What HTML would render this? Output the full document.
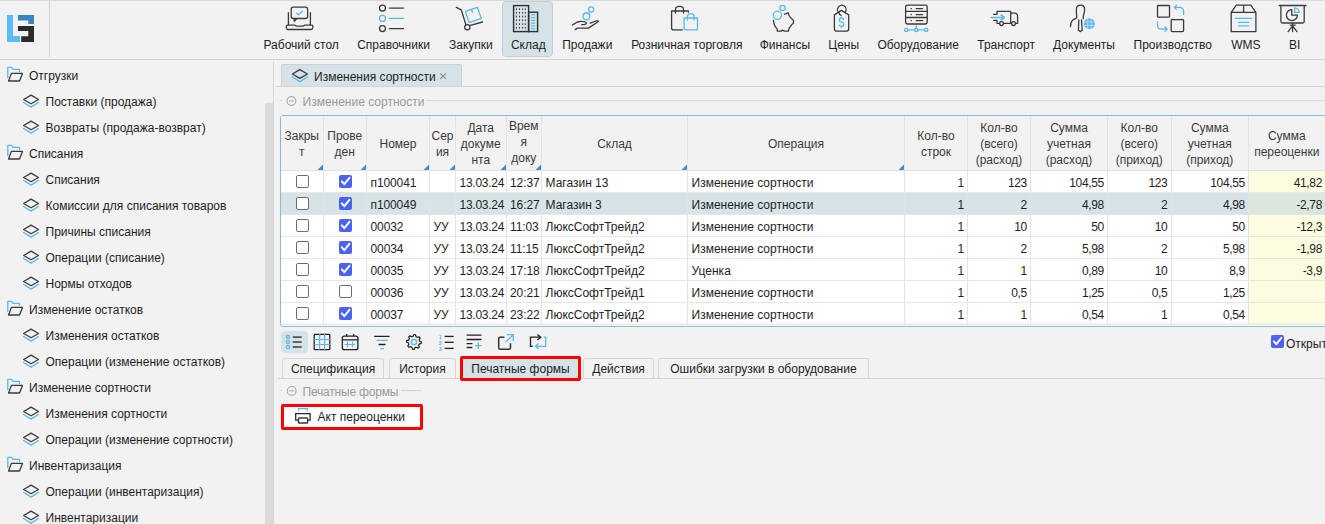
<!DOCTYPE html>
<html><head><meta charset="utf-8"><style>
html,body{margin:0;padding:0}
body{width:1325px;height:524px;background:#f2f2f2;position:relative;overflow:hidden;font-family:"Liberation Sans",sans-serif;font-size:12px;color:#1e1e1e}
.ab{position:absolute;white-space:nowrap}
.nl{position:absolute;top:38px;width:140px;text-align:center;font-size:12px;line-height:14px;color:#1e1e1e}
.si{position:absolute;font-size:12px;line-height:14px;color:#1e1e1e}
.th{position:absolute;text-align:center;color:#3a3a3a;font-size:12px;line-height:16px}
.td{position:absolute;font-size:12px;line-height:14px;white-space:nowrap;color:#1e1e1e}
.r{text-align:right}
</style></head><body>

<div class="ab" style="left:0;top:0;width:1325px;height:1px;background:#d9d9d9"></div>
<div class="ab" style="left:0;top:59px;width:1325px;height:1px;background:#d2d2d2"></div>
<div class="ab" style="left:49px;top:1px;width:1px;height:56px;background:#d2d2d2"></div>
<div class="ab" style="left:502px;top:1px;width:49px;height:54px;background:#d5e3e8;border:1px solid #c9cfd1;border-radius:4px"></div>
<div class="nl" style="left:231.2px">Рабочий стол</div>
<div class="nl" style="left:323.5px">Справочники</div>
<div class="nl" style="left:400.9px">Закупки</div>
<div class="nl" style="left:458.3px">Склад</div>
<div class="nl" style="left:517.3px">Продажи</div>
<div class="nl" style="left:616.8px">Розничная торговля</div>
<div class="nl" style="left:714.9px">Финансы</div>
<div class="nl" style="left:773.7px">Цены</div>
<div class="nl" style="left:848.2px">Оборудование</div>
<div class="nl" style="left:936.1px">Транспорт</div>
<div class="nl" style="left:1014.0px">Документы</div>
<div class="nl" style="left:1102.7px">Производство</div>
<div class="nl" style="left:1175.8px">WMS</div>
<div class="nl" style="left:1224.6px">BI</div>
<svg class="ab" style="left:0;top:0" width="1325" height="60" viewBox="0 0 1325 60"><rect x="7" y="15" width="6" height="27" fill="#5bbdf5"/><rect x="7" y="36" width="13" height="6" fill="#5bbdf5"/><path d="M18 15H34V24H28.3V20.5H18Z" fill="#3886c0"/><path d="M18 26H34V42H21.2V36.3H28.3V31H18Z" fill="#2b2b2b"/><path d="M293.2 18.5H305.6Q307.6 18.5 307.6 16.5V9.2Q307.6 7.2 305.6 7.2H293.2Q291.2 7.2 291.2 9.2V16.5Q291.2 18.5 293.2 18.5M294 18.6L294.3 21.3L296.8 18.6" fill="none" stroke="#3a3a3a" stroke-width="1.3" stroke-linecap="round" stroke-linejoin="round"/><path d="M296.7 13.3L298.5 14.8L302.5 11.2" fill="none" stroke="#5bb8ec" stroke-width="1.3" stroke-linecap="round" stroke-linejoin="round"/><path d="M288.4 12.7V25.2M310.4 12.7V25.2M287.5 25.2H295L296.5 26.2H303L304.5 25.2H312Q312.8 25.2 312.8 26.2V27.8Q312.8 29.5 311 29.5H288Q286.3 29.5 286.3 27.8V26.2Q286.3 25.2 287.5 25.2" fill="none" stroke="#3a3a3a" stroke-width="1.3" stroke-linecap="round" stroke-linejoin="round"/><circle cx="382.5" cy="8.1" r="3" fill="none" stroke="#3a3a3a" stroke-width="1.3" stroke-linecap="round" stroke-linejoin="round"/><path d="M389.3 8.1H403.6" fill="none" stroke="#3a3a3a" stroke-width="1.3" stroke-linecap="round" stroke-linejoin="round"/><circle cx="382.5" cy="18.4" r="3" fill="none" stroke="#5bb8ec" stroke-width="1.3" stroke-linecap="round" stroke-linejoin="round"/><path d="M389.3 18.4H403.6" fill="none" stroke="#5bb8ec" stroke-width="1.3" stroke-linecap="round" stroke-linejoin="round"/><circle cx="382.5" cy="28.6" r="3" fill="none" stroke="#3a3a3a" stroke-width="1.3" stroke-linecap="round" stroke-linejoin="round"/><path d="M389.3 28.6H403.6" fill="none" stroke="#3a3a3a" stroke-width="1.3" stroke-linecap="round" stroke-linejoin="round"/><path d="M456.3 7.3L461.2 9.8L466 25M470.3 25.3L482.5 22" fill="none" stroke="#3a3a3a" stroke-width="1.3" stroke-linecap="round" stroke-linejoin="round"/><circle cx="467.3" cy="27.2" r="2.6" fill="none" stroke="#3a3a3a" stroke-width="1.3" stroke-linecap="round" stroke-linejoin="round"/><path d="M465.4 11.3L477.3 7.3L481.3 18.3L469.1 22.6Z M471.4 9.3L472.3 12.3" fill="none" stroke="#5bb8ec" stroke-width="1.3" stroke-linecap="round" stroke-linejoin="round"/><rect x="513.6" y="5.6" width="15" height="26" fill="none" stroke="#2e2e2e" stroke-width="1.4"/><rect x="528.6" y="12.2" width="9" height="19.4" fill="none" stroke="#2e2e2e" stroke-width="1.4"/><rect x="516.0" y="8.399999999999999" width="1" height="1.6" fill="#333"/><rect x="516.0" y="12.0" width="1" height="1.6" fill="#333"/><rect x="516.0" y="15.7" width="1" height="1.6" fill="#333"/><rect x="516.0" y="19.4" width="1" height="1.6" fill="#333"/><rect x="516.0" y="23.3" width="1" height="1.6" fill="#333"/><rect x="516.0" y="27.0" width="1" height="1.6" fill="#333"/><rect x="519.0" y="8.399999999999999" width="1" height="1.6" fill="#333"/><rect x="519.0" y="12.0" width="1" height="1.6" fill="#333"/><rect x="519.0" y="15.7" width="1" height="1.6" fill="#333"/><rect x="519.0" y="19.4" width="1" height="1.6" fill="#333"/><rect x="519.0" y="23.3" width="1" height="1.6" fill="#333"/><rect x="519.0" y="27.0" width="1" height="1.6" fill="#333"/><rect x="522.1" y="8.399999999999999" width="1" height="1.6" fill="#333"/><rect x="522.1" y="12.0" width="1" height="1.6" fill="#333"/><rect x="522.1" y="15.7" width="1" height="1.6" fill="#333"/><rect x="522.1" y="19.4" width="1" height="1.6" fill="#333"/><rect x="522.1" y="23.3" width="1" height="1.6" fill="#333"/><rect x="522.1" y="27.0" width="1" height="1.6" fill="#333"/><rect x="524.8" y="8.399999999999999" width="1" height="1.6" fill="#333"/><rect x="524.8" y="12.0" width="1" height="1.6" fill="#333"/><rect x="524.8" y="15.7" width="1" height="1.6" fill="#333"/><rect x="524.8" y="19.4" width="1" height="1.6" fill="#333"/><rect x="524.8" y="23.3" width="1" height="1.6" fill="#333"/><rect x="524.8" y="27.0" width="1" height="1.6" fill="#333"/><path d="M531.1 14.7H535.1" stroke="#5bb8ec" stroke-width="1.1"/><path d="M531.1 17.7H535.1" stroke="#5bb8ec" stroke-width="1.1"/><path d="M531.1 20.5H535.1" stroke="#5bb8ec" stroke-width="1.1"/><path d="M531.1 23.2H535.1" stroke="#5bb8ec" stroke-width="1.1"/><path d="M531.1 26H535.1" stroke="#5bb8ec" stroke-width="1.1"/><path d="M531.1 28.7H535.1" stroke="#5bb8ec" stroke-width="1.1"/><circle cx="591.1" cy="9.5" r="2.6" fill="none" stroke="#5bb8ec" stroke-width="1.3" stroke-linecap="round" stroke-linejoin="round"/><circle cx="586.4" cy="16.4" r="3.4" fill="none" stroke="#5bb8ec" stroke-width="1.3" stroke-linecap="round" stroke-linejoin="round"/><path d="M572.5 25Q577 21.6 580.4 21.4Q585 21.2 586.5 22.9Q586.5 24.4 581.7 24.7M590.2 23.2L597.5 20.5Q598.5 21 598.1 21.7L588.4 28.1L577.4 28.1L575.2 29.6" fill="none" stroke="#3a3a3a" stroke-width="1.3" stroke-linecap="round" stroke-linejoin="round"/><path d="M688.4 12V11H671.6V27.9Q671.6 29.9 673.6 29.9H682.3M675.5 13.1V9.5Q675.5 6.4 679.5 6.4Q683.5 6.4 683.5 9.5V13.1" fill="none" stroke="#3a3a3a" stroke-width="1.3" stroke-linecap="round" stroke-linejoin="round"/><path d="M684.1 18H697.5V27.9Q697.5 29.9 695.5 29.9H686.1Q684.1 29.9 684.1 27.9Z M687.5 20V16.5Q687.5 13.7 690.8 13.7Q694 13.7 694 16.5V20" fill="none" stroke="#5bb8ec" stroke-width="1.3" stroke-linecap="round" stroke-linejoin="round"/><circle cx="782.6" cy="8" r="2.6" fill="none" stroke="#5bb8ec" stroke-width="1.3" stroke-linecap="round" stroke-linejoin="round"/><circle cx="777.4" cy="15.3" r="4.1" fill="none" stroke="#5bb8ec" stroke-width="1.3" stroke-linecap="round" stroke-linejoin="round"/><path d="M773.5 20.5Q773.7 25.5 777.1 29L777.4 31.2H781.4L782.3 30L784.2 31.2H788.4L789 28.4L792.1 24.2L793.3 23.5L793.6 20.5L790.3 17.4L788.7 15L788.4 12.9Q787 12.6 786.6 13.6L784.5 14.1" fill="none" stroke="#3a3a3a" stroke-width="1.3" stroke-linecap="round" stroke-linejoin="round"/><path d="M841.4 10.4L848.7 14.9V28.7Q848.7 31.2 846.2 31.2H836.9Q834.4 31.2 834.4 28.7V14.9Z" fill="none" stroke="#3a3a3a" stroke-width="1.3" stroke-linecap="round" stroke-linejoin="round"/><path d="M841 15.4Q839.2 14.6 839.2 13A4.3 4.3 0 1 1 845.3 12" fill="none" stroke="#3a3a3a" stroke-width="1.3" stroke-linecap="round" stroke-linejoin="round"/><path d="M843.6 19.2Q842.9 18.2 841.4 18.2Q839.2 18.2 839.2 20Q839.2 21.8 841.4 22.2Q843.8 22.6 843.8 24.4Q843.8 26.3 841.4 26.3Q839.8 26.3 839 25.2M841.4 17V18.2M841.4 26.3V27.5" fill="none" stroke="#5bb8ec" stroke-width="1.3" stroke-linecap="round" stroke-linejoin="round"/><rect x="905.6" y="5.2" width="21.6" height="18.8" rx="1.8" fill="none" stroke="#3a3a3a" stroke-width="1.3" stroke-linecap="round" stroke-linejoin="round"/><path d="M905.6 11.3H927.2M905.6 17.5H927.2" fill="none" stroke="#3a3a3a" stroke-width="1.3" stroke-linecap="round" stroke-linejoin="round"/><path d="M911 8.6H911.4M916.2 8.6H922.7" fill="none" stroke="#3a3a3a" stroke-width="1.3" stroke-linecap="round" stroke-linejoin="round"/><path d="M911 14.6H911.4M916.2 14.6H922.7" fill="none" stroke="#3a3a3a" stroke-width="1.3" stroke-linecap="round" stroke-linejoin="round"/><path d="M911 20.6H911.4M916.2 20.6H922.7" fill="none" stroke="#3a3a3a" stroke-width="1.3" stroke-linecap="round" stroke-linejoin="round"/><path d="M907.8 29.9H914.6M917.8 29.9H924.6M916.2 25.6V28.3" fill="none" stroke="#5bb8ec" stroke-width="1.3" stroke-linecap="round" stroke-linejoin="round"/><circle cx="906.2" cy="29.9" r="1.6" fill="none" stroke="#5bb8ec" stroke-width="1.3" stroke-linecap="round" stroke-linejoin="round"/><circle cx="916.2" cy="29.9" r="1.6" fill="none" stroke="#5bb8ec" stroke-width="1.3" stroke-linecap="round" stroke-linejoin="round"/><circle cx="926.2" cy="29.9" r="1.6" fill="none" stroke="#5bb8ec" stroke-width="1.3" stroke-linecap="round" stroke-linejoin="round"/><path d="M993.6 14.4H997V11.3H1010.7V23.4H1003.6M999.5 23.4H997V20.3H993.6M1010.7 13.1H1014.6Q1017.6 13.1 1017.6 16.5V23.4H1015.6M1011.5 23.4H1010.7" fill="none" stroke="#3a3a3a" stroke-width="1.3" stroke-linecap="round" stroke-linejoin="round"/><circle cx="1001.5" cy="23.6" r="1.9" fill="none" stroke="#3a3a3a" stroke-width="1.3" stroke-linecap="round" stroke-linejoin="round"/><circle cx="1013.5" cy="23.6" r="1.9" fill="none" stroke="#3a3a3a" stroke-width="1.3" stroke-linecap="round" stroke-linejoin="round"/><path d="M991.2 17.5H1004.2M1001.2 15L1004.4 17.5L1001.2 20" fill="none" stroke="#5bb8ec" stroke-width="1.6" stroke-linecap="round" stroke-linejoin="round"/><path d="M1076.7 17.2Q1076.4 14 1076.4 9.5Q1076.4 5.2 1080.5 5.2Q1084.6 5.2 1084.6 9.5Q1084.6 12.5 1083.9 13.7Q1083.2 15.5 1083.2 18.6M1076.7 17.9Q1073.5 19.5 1072.2 20.6Q1070.5 22.5 1070.5 26.5M1078.8 19.9L1078.4 30.2L1080.5 31.6L1082.2 30.2L1081.5 19.9" fill="none" stroke="#3a3a3a" stroke-width="1.3" stroke-linecap="round" stroke-linejoin="round"/><circle cx="1089.4" cy="23.7" r="5.5" fill="#5bb8ec"/><path d="M1084.2 22H1094.6M1084.2 25.4H1094.6M1087.7 18.5V29M1091.1 18.5V29" stroke="#d8eefa" stroke-width="0.6"/><rect x="1157.5" y="5.5" width="12" height="11.7" rx="0.8" fill="none" stroke="#3a3a3a" stroke-width="1.3" stroke-linecap="round" stroke-linejoin="round"/><rect x="1171.2" y="19.6" width="12.4" height="12" rx="0.8" fill="none" stroke="#3a3a3a" stroke-width="1.3" stroke-linecap="round" stroke-linejoin="round"/><path d="M1183.6 14.4V11.5Q1183.6 7.4 1179 7.4H1174.2M1176.5 5.2L1174.2 7.4L1176.5 9.6M1157.5 22V25Q1157.5 29.2 1162 29.2H1167.3M1165 27L1167.3 29.2L1165 31.4" fill="none" stroke="#5bb8ec" stroke-width="1.3" stroke-linecap="round" stroke-linejoin="round"/><path d="M1236.3 5.2H1250.8L1255.9 12.4V31.6H1231.2V12.4Z M1231.2 12.4H1255.9 M1243.6 5.2V12.4" fill="none" stroke="#3a3a3a" stroke-width="1.3" stroke-linecap="round" stroke-linejoin="round"/><path d="M1235.3 18.4H1251.8M1238.4 22.3H1248.7M1238.4 25.8H1248.7" fill="none" stroke="#5bb8ec" stroke-width="1.3" stroke-linecap="round" stroke-linejoin="round"/><path d="M1279.2 5.5H1306M1280.9 5.5V21.5Q1280.9 23 1282.4 23H1302.7Q1304.2 23 1304.2 21.5V5.5M1290.2 25.1H1295.3M1292.6 23V31.6M1292.6 25.8L1288.1 31.6M1292.6 25.8L1297 31.6" fill="none" stroke="#3a3a3a" stroke-width="1.3" stroke-linecap="round" stroke-linejoin="round"/><path d="M1291.8 9.6A5.5 5.5 0 1 0 1297.4 15.2H1291.8Z" fill="none" stroke="#3a3a3a" stroke-width="1.3" stroke-linecap="round" stroke-linejoin="round"/><path d="M1294.6 7.8V12.4H1299.2A4.6 4.6 0 0 0 1294.6 7.8Z" fill="none" stroke="#5bb8ec" stroke-width="1.3" stroke-linecap="round" stroke-linejoin="round"/></svg>
<div class="si" style="left:29px;top:68.7px">Отгрузки</div>
<div class="si" style="left:45.5px;top:94.7px">Поставки (продажа)</div>
<div class="si" style="left:45.5px;top:120.7px">Возвраты (продажа-возврат)</div>
<div class="si" style="left:29px;top:146.7px">Списания</div>
<div class="si" style="left:45.5px;top:172.7px">Списания</div>
<div class="si" style="left:45.5px;top:198.7px">Комиссии для списания товаров</div>
<div class="si" style="left:45.5px;top:224.7px">Причины списания</div>
<div class="si" style="left:45.5px;top:250.7px">Операции (списание)</div>
<div class="si" style="left:45.5px;top:276.7px">Нормы отходов</div>
<div class="si" style="left:29px;top:302.7px">Изменение остатков</div>
<div class="si" style="left:45.5px;top:328.7px">Изменения остатков</div>
<div class="si" style="left:45.5px;top:354.7px">Операции (изменение остатков)</div>
<div class="si" style="left:29px;top:380.7px">Изменение сортности</div>
<div class="si" style="left:45.5px;top:406.7px">Изменения сортности</div>
<div class="si" style="left:45.5px;top:432.7px">Операции (изменение сортности)</div>
<div class="si" style="left:29px;top:458.7px">Инвентаризация</div>
<div class="si" style="left:45.5px;top:484.7px">Операции (инвентаризация)</div>
<div class="si" style="left:45.5px;top:510.7px">Инвентаризации</div>
<svg class="ab" style="left:0;top:0" width="60" height="524" viewBox="0 0 60 524"><path d="M7.8 77.7V67.4H11.6L13 69.3H19.5V71.6" fill="none" stroke="#5bb8ec" stroke-width="1.3" stroke-linecap="round" stroke-linejoin="round"/><path d="M11.4 73.4H22.5L19.5 81.0H8.6Z" fill="none" stroke="#3a3a3a" stroke-width="1.3" stroke-linecap="round" stroke-linejoin="round"/><path d="M23.6 99.5L31.1 95.1L38.5 99.5L31.1 103.7Z" fill="none" stroke="#3a3a3a" stroke-width="1.3" stroke-linecap="round" stroke-linejoin="round"/><path d="M23.6 102.5L31.1 107.1L38.5 102.5" fill="none" stroke="#5bb8ec" stroke-width="1.3" stroke-linecap="round" stroke-linejoin="round"/><path d="M23.6 125.5L31.1 121.1L38.5 125.5L31.1 129.7Z" fill="none" stroke="#3a3a3a" stroke-width="1.3" stroke-linecap="round" stroke-linejoin="round"/><path d="M23.6 128.5L31.1 133.1L38.5 128.5" fill="none" stroke="#5bb8ec" stroke-width="1.3" stroke-linecap="round" stroke-linejoin="round"/><path d="M7.8 155.7V145.4H11.6L13 147.3H19.5V149.6" fill="none" stroke="#5bb8ec" stroke-width="1.3" stroke-linecap="round" stroke-linejoin="round"/><path d="M11.4 151.4H22.5L19.5 159.0H8.6Z" fill="none" stroke="#3a3a3a" stroke-width="1.3" stroke-linecap="round" stroke-linejoin="round"/><path d="M23.6 177.5L31.1 173.1L38.5 177.5L31.1 181.7Z" fill="none" stroke="#3a3a3a" stroke-width="1.3" stroke-linecap="round" stroke-linejoin="round"/><path d="M23.6 180.5L31.1 185.1L38.5 180.5" fill="none" stroke="#5bb8ec" stroke-width="1.3" stroke-linecap="round" stroke-linejoin="round"/><path d="M23.6 203.5L31.1 199.1L38.5 203.5L31.1 207.7Z" fill="none" stroke="#3a3a3a" stroke-width="1.3" stroke-linecap="round" stroke-linejoin="round"/><path d="M23.6 206.5L31.1 211.1L38.5 206.5" fill="none" stroke="#5bb8ec" stroke-width="1.3" stroke-linecap="round" stroke-linejoin="round"/><path d="M23.6 229.5L31.1 225.1L38.5 229.5L31.1 233.7Z" fill="none" stroke="#3a3a3a" stroke-width="1.3" stroke-linecap="round" stroke-linejoin="round"/><path d="M23.6 232.5L31.1 237.1L38.5 232.5" fill="none" stroke="#5bb8ec" stroke-width="1.3" stroke-linecap="round" stroke-linejoin="round"/><path d="M23.6 255.5L31.1 251.1L38.5 255.5L31.1 259.7Z" fill="none" stroke="#3a3a3a" stroke-width="1.3" stroke-linecap="round" stroke-linejoin="round"/><path d="M23.6 258.5L31.1 263.1L38.5 258.5" fill="none" stroke="#5bb8ec" stroke-width="1.3" stroke-linecap="round" stroke-linejoin="round"/><path d="M23.6 281.5L31.1 277.1L38.5 281.5L31.1 285.7Z" fill="none" stroke="#3a3a3a" stroke-width="1.3" stroke-linecap="round" stroke-linejoin="round"/><path d="M23.6 284.5L31.1 289.1L38.5 284.5" fill="none" stroke="#5bb8ec" stroke-width="1.3" stroke-linecap="round" stroke-linejoin="round"/><path d="M7.8 311.7V301.4H11.6L13 303.3H19.5V305.6" fill="none" stroke="#5bb8ec" stroke-width="1.3" stroke-linecap="round" stroke-linejoin="round"/><path d="M11.4 307.4H22.5L19.5 315.0H8.6Z" fill="none" stroke="#3a3a3a" stroke-width="1.3" stroke-linecap="round" stroke-linejoin="round"/><path d="M23.6 333.5L31.1 329.1L38.5 333.5L31.1 337.7Z" fill="none" stroke="#3a3a3a" stroke-width="1.3" stroke-linecap="round" stroke-linejoin="round"/><path d="M23.6 336.5L31.1 341.1L38.5 336.5" fill="none" stroke="#5bb8ec" stroke-width="1.3" stroke-linecap="round" stroke-linejoin="round"/><path d="M23.6 359.5L31.1 355.1L38.5 359.5L31.1 363.7Z" fill="none" stroke="#3a3a3a" stroke-width="1.3" stroke-linecap="round" stroke-linejoin="round"/><path d="M23.6 362.5L31.1 367.1L38.5 362.5" fill="none" stroke="#5bb8ec" stroke-width="1.3" stroke-linecap="round" stroke-linejoin="round"/><path d="M7.8 389.7V379.4H11.6L13 381.3H19.5V383.6" fill="none" stroke="#5bb8ec" stroke-width="1.3" stroke-linecap="round" stroke-linejoin="round"/><path d="M11.4 385.4H22.5L19.5 393.0H8.6Z" fill="none" stroke="#3a3a3a" stroke-width="1.3" stroke-linecap="round" stroke-linejoin="round"/><path d="M23.6 411.5L31.1 407.1L38.5 411.5L31.1 415.7Z" fill="none" stroke="#3a3a3a" stroke-width="1.3" stroke-linecap="round" stroke-linejoin="round"/><path d="M23.6 414.5L31.1 419.1L38.5 414.5" fill="none" stroke="#5bb8ec" stroke-width="1.3" stroke-linecap="round" stroke-linejoin="round"/><path d="M23.6 437.5L31.1 433.1L38.5 437.5L31.1 441.7Z" fill="none" stroke="#3a3a3a" stroke-width="1.3" stroke-linecap="round" stroke-linejoin="round"/><path d="M23.6 440.5L31.1 445.1L38.5 440.5" fill="none" stroke="#5bb8ec" stroke-width="1.3" stroke-linecap="round" stroke-linejoin="round"/><path d="M7.8 467.7V457.4H11.6L13 459.3H19.5V461.6" fill="none" stroke="#5bb8ec" stroke-width="1.3" stroke-linecap="round" stroke-linejoin="round"/><path d="M11.4 463.4H22.5L19.5 471.0H8.6Z" fill="none" stroke="#3a3a3a" stroke-width="1.3" stroke-linecap="round" stroke-linejoin="round"/><path d="M23.6 489.5L31.1 485.1L38.5 489.5L31.1 493.7Z" fill="none" stroke="#3a3a3a" stroke-width="1.3" stroke-linecap="round" stroke-linejoin="round"/><path d="M23.6 492.5L31.1 497.1L38.5 492.5" fill="none" stroke="#5bb8ec" stroke-width="1.3" stroke-linecap="round" stroke-linejoin="round"/><path d="M23.6 515.5L31.1 511.1L38.5 515.5L31.1 519.7Z" fill="none" stroke="#3a3a3a" stroke-width="1.3" stroke-linecap="round" stroke-linejoin="round"/><path d="M23.6 518.5L31.1 523.1L38.5 518.5" fill="none" stroke="#5bb8ec" stroke-width="1.3" stroke-linecap="round" stroke-linejoin="round"/></svg>
<div class="ab" style="left:265px;top:103px;width:8px;height:421px;background:#dadada"></div>
<div class="ab" style="left:273px;top:61px;width:1px;height:463px;background:#d6d6d6"></div>
<div class="ab" style="left:281px;top:64px;width:179px;height:22px;background:#d5e3e8;border:1px solid #cdd1d3;border-bottom:none;border-radius:3px 3px 0 0"></div>
<div class="ab" style="left:276px;top:86px;width:1049px;height:1px;background:#d4d4d4"></div>
<div class="ab" style="left:314px;top:70px;font-size:12px;line-height:14px;color:#1e1e1e">Изменения сортности</div>
<div class="ab" style="left:302.5px;top:95px;color:#9a9a9a">Изменение сортности</div>
<div class="ab" style="left:302.5px;top:384.5px;color:#9a9a9a;letter-spacing:-0.2px">Печатные формы</div>
<div class="ab" style="left:280px;top:115px;width:1100px;height:210px;background:#fff;border:1px solid #8dbad2;border-radius:3px;overflow:hidden"></div>
<div class="ab" style="left:281px;top:116px;width:1044px;height:54px;background:#f2f2f2"></div>
<div class="ab" style="left:281px;top:193px;width:1044px;height:21px;background:#d6e4e8"></div>
<div class="ab" style="left:1249px;top:171px;width:80px;height:154px;background:#fcfde0"></div>
<div class="ab" style="left:1249px;top:193px;width:80px;height:21px;background:#dae6de"></div>
<div class="ab" style="left:323px;top:116px;width:1px;height:209px;background:#e3e3e3"></div>
<div class="ab" style="left:366px;top:116px;width:1px;height:209px;background:#e3e3e3"></div>
<div class="ab" style="left:429px;top:116px;width:1px;height:209px;background:#e3e3e3"></div>
<div class="ab" style="left:455px;top:116px;width:1px;height:209px;background:#e3e3e3"></div>
<div class="ab" style="left:506px;top:116px;width:1px;height:209px;background:#e3e3e3"></div>
<div class="ab" style="left:541px;top:116px;width:1px;height:209px;background:#e3e3e3"></div>
<div class="ab" style="left:687px;top:116px;width:1px;height:209px;background:#e3e3e3"></div>
<div class="ab" style="left:904px;top:116px;width:1px;height:209px;background:#e3e3e3"></div>
<div class="ab" style="left:967px;top:116px;width:1px;height:209px;background:#e3e3e3"></div>
<div class="ab" style="left:1030px;top:116px;width:1px;height:209px;background:#e3e3e3"></div>
<div class="ab" style="left:1107px;top:116px;width:1px;height:209px;background:#e3e3e3"></div>
<div class="ab" style="left:1171px;top:116px;width:1px;height:209px;background:#e3e3e3"></div>
<div class="ab" style="left:1248px;top:116px;width:1px;height:209px;background:#e3e3e3"></div>
<div class="ab" style="left:281px;top:170px;width:1044px;height:1px;background:#e0e0e0"></div>
<div class="ab" style="left:281px;top:192px;width:1044px;height:1px;background:#e6e6e6"></div>
<div class="ab" style="left:281px;top:214px;width:1044px;height:1px;background:#e6e6e6"></div>
<div class="ab" style="left:281px;top:236px;width:1044px;height:1px;background:#e6e6e6"></div>
<div class="ab" style="left:281px;top:258px;width:1044px;height:1px;background:#e6e6e6"></div>
<div class="ab" style="left:281px;top:280px;width:1044px;height:1px;background:#e6e6e6"></div>
<div class="ab" style="left:281px;top:302px;width:1044px;height:1px;background:#e6e6e6"></div>
<div class="ab" style="left:281px;top:324px;width:1044px;height:1px;background:#e6e6e6"></div>
<div class="th" style="left:280.5px;top:127.5px;width:42.5px">Закры<br>т</div>
<div class="th" style="left:323.0px;top:127.5px;width:43.5px">Прове<br>ден</div>
<div class="th" style="left:366.5px;top:135.5px;width:63.0px">Номер</div>
<div class="th" style="left:429.5px;top:127.5px;width:26.0px">Сер<br>ия</div>
<div class="th" style="left:455.5px;top:119.5px;width:50.5px">Дата<br>докуме<br>нта</div>
<div class="th" style="left:506.0px;top:117.5px;width:35.5px">Врем<br>я<br>доку</div>
<div class="th" style="left:541.5px;top:135.5px;width:146.0px">Склад</div>
<div class="th" style="left:687.5px;top:135.5px;width:217.0px">Операция</div>
<div class="th" style="left:904.5px;top:127.5px;width:63.0px">Кол-во<br>строк</div>
<div class="th" style="left:967.5px;top:119.5px;width:63.0px">Кол-во<br>(всего)<br>(расход)</div>
<div class="th" style="left:1030.5px;top:119.5px;width:77.0px">Сумма<br>учетная<br>(расход)</div>
<div class="th" style="left:1107.5px;top:119.5px;width:63.5px">Кол-во<br>(всего)<br>(приход)</div>
<div class="th" style="left:1171.0px;top:119.5px;width:77.5px">Сумма<br>учетная<br>(приход)</div>
<div class="th" style="left:1248.5px;top:127.5px;width:76.5px">Сумма<br>переоценки</div>
<div class="ab" style="left:296px;top:175px;width:11px;height:11px;border:1.3px solid #6e6e6e;border-radius:2px;background:#fff"></div>
<div class="ab" style="left:339px;top:175px;width:13px;height:13px;background:#4a63f2;border-radius:2px"></div>
<div class="td" style="left:370.5px;top:176px;letter-spacing:-0.1px">п100041</div>
<div class="td" style="left:459.5px;top:176px;letter-spacing:-0.25px">13.03.24</div>
<div class="td" style="left:510.0px;top:176px;letter-spacing:-0.1px">12:37</div>
<div class="td" style="left:545.5px;top:176px;letter-spacing:0">Магазин 13</div>
<div class="td" style="left:691.5px;top:176px;letter-spacing:0">Изменение сортности</div>
<div class="td r" style="right:361.1px;top:176px;letter-spacing:-0.35px">1</div>
<div class="td r" style="right:298.1px;top:176px;letter-spacing:-0.35px">123</div>
<div class="td r" style="right:221.1px;top:176px;letter-spacing:-0.35px">104,55</div>
<div class="td r" style="right:157.6px;top:176px;letter-spacing:-0.35px">123</div>
<div class="td r" style="right:80.1px;top:176px;letter-spacing:-0.35px">104,55</div>
<div class="td r" style="right:3.0px;top:176px;letter-spacing:-0.35px">41,82</div>
<div class="ab" style="left:296px;top:197px;width:11px;height:11px;border:1.3px solid #6e6e6e;border-radius:2px;background:#fff"></div>
<div class="ab" style="left:339px;top:197px;width:13px;height:13px;background:#4a63f2;border-radius:2px"></div>
<div class="td" style="left:370.5px;top:198px;letter-spacing:-0.1px">п100049</div>
<div class="td" style="left:459.5px;top:198px;letter-spacing:-0.25px">13.03.24</div>
<div class="td" style="left:510.0px;top:198px;letter-spacing:-0.1px">16:27</div>
<div class="td" style="left:545.5px;top:198px;letter-spacing:0">Магазин 3</div>
<div class="td" style="left:691.5px;top:198px;letter-spacing:0">Изменение сортности</div>
<div class="td r" style="right:361.1px;top:198px;letter-spacing:-0.35px">1</div>
<div class="td r" style="right:298.1px;top:198px;letter-spacing:-0.35px">2</div>
<div class="td r" style="right:221.1px;top:198px;letter-spacing:-0.35px">4,98</div>
<div class="td r" style="right:157.6px;top:198px;letter-spacing:-0.35px">2</div>
<div class="td r" style="right:80.1px;top:198px;letter-spacing:-0.35px">4,98</div>
<div class="td r" style="right:3.0px;top:198px;letter-spacing:-0.35px">-2,78</div>
<div class="ab" style="left:296px;top:219px;width:11px;height:11px;border:1.3px solid #6e6e6e;border-radius:2px;background:#fff"></div>
<div class="ab" style="left:339px;top:219px;width:13px;height:13px;background:#4a63f2;border-radius:2px"></div>
<div class="td" style="left:370.5px;top:220px;letter-spacing:-0.1px">00032</div>
<div class="td" style="left:433.5px;top:220px;letter-spacing:0">УУ</div>
<div class="td" style="left:459.5px;top:220px;letter-spacing:-0.25px">13.03.24</div>
<div class="td" style="left:510.0px;top:220px;letter-spacing:-0.1px">11:03</div>
<div class="td" style="left:545.5px;top:220px;letter-spacing:0">ЛюксСофтТрейд2</div>
<div class="td" style="left:691.5px;top:220px;letter-spacing:0">Изменение сортности</div>
<div class="td r" style="right:361.1px;top:220px;letter-spacing:-0.35px">1</div>
<div class="td r" style="right:298.1px;top:220px;letter-spacing:-0.35px">10</div>
<div class="td r" style="right:221.1px;top:220px;letter-spacing:-0.35px">50</div>
<div class="td r" style="right:157.6px;top:220px;letter-spacing:-0.35px">10</div>
<div class="td r" style="right:80.1px;top:220px;letter-spacing:-0.35px">50</div>
<div class="td r" style="right:3.0px;top:220px;letter-spacing:-0.35px">-12,3</div>
<div class="ab" style="left:296px;top:241px;width:11px;height:11px;border:1.3px solid #6e6e6e;border-radius:2px;background:#fff"></div>
<div class="ab" style="left:339px;top:241px;width:13px;height:13px;background:#4a63f2;border-radius:2px"></div>
<div class="td" style="left:370.5px;top:242px;letter-spacing:-0.1px">00034</div>
<div class="td" style="left:433.5px;top:242px;letter-spacing:0">УУ</div>
<div class="td" style="left:459.5px;top:242px;letter-spacing:-0.25px">13.03.24</div>
<div class="td" style="left:510.0px;top:242px;letter-spacing:-0.1px">11:15</div>
<div class="td" style="left:545.5px;top:242px;letter-spacing:0">ЛюксСофтТрейд2</div>
<div class="td" style="left:691.5px;top:242px;letter-spacing:0">Изменение сортности</div>
<div class="td r" style="right:361.1px;top:242px;letter-spacing:-0.35px">1</div>
<div class="td r" style="right:298.1px;top:242px;letter-spacing:-0.35px">2</div>
<div class="td r" style="right:221.1px;top:242px;letter-spacing:-0.35px">5,98</div>
<div class="td r" style="right:157.6px;top:242px;letter-spacing:-0.35px">2</div>
<div class="td r" style="right:80.1px;top:242px;letter-spacing:-0.35px">5,98</div>
<div class="td r" style="right:3.0px;top:242px;letter-spacing:-0.35px">-1,98</div>
<div class="ab" style="left:296px;top:263px;width:11px;height:11px;border:1.3px solid #6e6e6e;border-radius:2px;background:#fff"></div>
<div class="ab" style="left:339px;top:263px;width:13px;height:13px;background:#4a63f2;border-radius:2px"></div>
<div class="td" style="left:370.5px;top:264px;letter-spacing:-0.1px">00035</div>
<div class="td" style="left:433.5px;top:264px;letter-spacing:0">УУ</div>
<div class="td" style="left:459.5px;top:264px;letter-spacing:-0.25px">13.03.24</div>
<div class="td" style="left:510.0px;top:264px;letter-spacing:-0.1px">17:18</div>
<div class="td" style="left:545.5px;top:264px;letter-spacing:0">ЛюксСофтТрейд2</div>
<div class="td" style="left:691.5px;top:264px;letter-spacing:0">Уценка</div>
<div class="td r" style="right:361.1px;top:264px;letter-spacing:-0.35px">1</div>
<div class="td r" style="right:298.1px;top:264px;letter-spacing:-0.35px">1</div>
<div class="td r" style="right:221.1px;top:264px;letter-spacing:-0.35px">0,89</div>
<div class="td r" style="right:157.6px;top:264px;letter-spacing:-0.35px">10</div>
<div class="td r" style="right:80.1px;top:264px;letter-spacing:-0.35px">8,9</div>
<div class="td r" style="right:3.0px;top:264px;letter-spacing:-0.35px">-3,9</div>
<div class="ab" style="left:296px;top:285px;width:11px;height:11px;border:1.3px solid #6e6e6e;border-radius:2px;background:#fff"></div>
<div class="ab" style="left:339px;top:285px;width:11px;height:11px;border:1.3px solid #6e6e6e;border-radius:2px;background:#fff"></div>
<div class="td" style="left:370.5px;top:286px;letter-spacing:-0.1px">00036</div>
<div class="td" style="left:433.5px;top:286px;letter-spacing:0">УУ</div>
<div class="td" style="left:459.5px;top:286px;letter-spacing:-0.25px">13.03.24</div>
<div class="td" style="left:510.0px;top:286px;letter-spacing:-0.1px">20:21</div>
<div class="td" style="left:545.5px;top:286px;letter-spacing:0">ЛюксСофтТрейд1</div>
<div class="td" style="left:691.5px;top:286px;letter-spacing:0">Изменение сортности</div>
<div class="td r" style="right:361.1px;top:286px;letter-spacing:-0.35px">1</div>
<div class="td r" style="right:298.1px;top:286px;letter-spacing:-0.35px">0,5</div>
<div class="td r" style="right:221.1px;top:286px;letter-spacing:-0.35px">1,25</div>
<div class="td r" style="right:157.6px;top:286px;letter-spacing:-0.35px">0,5</div>
<div class="td r" style="right:80.1px;top:286px;letter-spacing:-0.35px">1,25</div>
<div class="ab" style="left:296px;top:307px;width:11px;height:11px;border:1.3px solid #6e6e6e;border-radius:2px;background:#fff"></div>
<div class="ab" style="left:339px;top:307px;width:13px;height:13px;background:#4a63f2;border-radius:2px"></div>
<div class="td" style="left:370.5px;top:308px;letter-spacing:-0.1px">00037</div>
<div class="td" style="left:433.5px;top:308px;letter-spacing:0">УУ</div>
<div class="td" style="left:459.5px;top:308px;letter-spacing:-0.25px">13.03.24</div>
<div class="td" style="left:510.0px;top:308px;letter-spacing:-0.1px">23:22</div>
<div class="td" style="left:545.5px;top:308px;letter-spacing:0">ЛюксСофтТрейд2</div>
<div class="td" style="left:691.5px;top:308px;letter-spacing:0">Изменение сортности</div>
<div class="td r" style="right:361.1px;top:308px;letter-spacing:-0.35px">1</div>
<div class="td r" style="right:298.1px;top:308px;letter-spacing:-0.35px">1</div>
<div class="td r" style="right:221.1px;top:308px;letter-spacing:-0.35px">0,54</div>
<div class="td r" style="right:157.6px;top:308px;letter-spacing:-0.35px">1</div>
<div class="td r" style="right:80.1px;top:308px;letter-spacing:-0.35px">0,54</div>
<div class="ab" style="left:280.5px;top:331px;width:27px;height:21.5px;background:#d5e3e8;border-radius:4px"></div>
<div class="ab" style="left:1271px;top:335px;width:13px;height:13px;background:#4a63f2;border-radius:2px"></div>
<div class="ab" style="left:1286px;top:337px">Открыт</div>
<div class="ab" style="left:278px;top:378px;width:1047px;height:1px;background:#d4d4d4"></div>
<div class="ab" style="left:281.7px;top:357.7px;width:100.7px;height:20.3px;border:1px solid #d6d6d6;border-bottom:none;border-radius:3px 3px 0 0;text-align:center;line-height:20px">Спецификация</div>
<div class="ab" style="left:388.5px;top:357.7px;width:65.9px;height:20.3px;border:1px solid #d6d6d6;border-bottom:none;border-radius:3px 3px 0 0;text-align:center;line-height:20px">История</div>
<div class="ab" style="left:582.9px;top:357.7px;width:69.3px;height:20.3px;border:1px solid #d6d6d6;border-bottom:none;border-radius:3px 3px 0 0;text-align:center;line-height:20px">Действия</div>
<div class="ab" style="left:658.3px;top:357.7px;width:208.3px;height:20.3px;border:1px solid #d6d6d6;border-bottom:none;border-radius:3px 3px 0 0;text-align:center;line-height:20px">Ошибки загрузки в оборудование</div>
<div class="ab" style="left:460px;top:356px;width:115px;height:19px;background:#d5e3e8;border:3px solid #ff0000;border-radius:2px;text-align:center;line-height:21px">Печатные формы</div>
<div class="ab" style="left:281px;top:404px;width:136px;height:20px;background:#fff;border:3px solid #ff0000;border-radius:2px"></div>
<div class="ab" style="left:317.5px;top:409.5px">Акт переоценки</div>
<svg class="ab" style="left:0;top:0" width="1325" height="524" viewBox="0 0 1325 524"><path d="M292.4 74L299.9 69.6L307.4 74L299.9 78.4Z" fill="none" stroke="#3a3a3a" stroke-width="1.3" stroke-linecap="round" stroke-linejoin="round"/><path d="M292.4 77L299.9 81.6L307.4 77" fill="none" stroke="#5bb8ec" stroke-width="1.3" stroke-linecap="round" stroke-linejoin="round"/><path d="M440.2 73.3L446 78.9M446 73.3L440.2 78.9" stroke="#888" stroke-width="1.1"/><path d="M280.3 100.6H282" stroke="#c8c8c8" stroke-width="1"/><circle cx="291.4" cy="101" r="4.4" fill="none" stroke="#a8a8a8" stroke-width="1.1"/><path d="M289 101H293.8" stroke="#a8a8a8" stroke-width="1.1"/><path d="M426 100.6H1325" stroke="#d8d8d8" stroke-width="1"/><path d="M280.3 390.6H282" stroke="#c8c8c8" stroke-width="1"/><circle cx="291.7" cy="390.9" r="4.4" fill="none" stroke="#a8a8a8" stroke-width="1.1"/><path d="M289.3 390.9H294.1" stroke="#a8a8a8" stroke-width="1.1"/><path d="M401 390.6H421" stroke="#d0d0d0" stroke-width="1"/><path d="M323 164.5L323 170L317.5 170Z" fill="#3d8ed0"/><path d="M366 164.5L366 170L360.5 170Z" fill="#3d8ed0"/><path d="M429 164.5L429 170L423.5 170Z" fill="#3d8ed0"/><path d="M455 164.5L455 170L449.5 170Z" fill="#3d8ed0"/><path d="M506 164.5L506 170L500.5 170Z" fill="#3d8ed0"/><path d="M541 164.5L541 170L535.5 170Z" fill="#3d8ed0"/><path d="M687 164.5L687 170L681.5 170Z" fill="#3d8ed0"/><path d="M904 164.5L904 170L898.5 170Z" fill="#3d8ed0"/><path d="M341.8 181.4L344.3 184.2L349.4 177.9" fill="none" stroke="#fff" stroke-width="2" stroke-linecap="round" stroke-linejoin="round"/><path d="M341.8 203.4L344.3 206.2L349.4 199.9" fill="none" stroke="#fff" stroke-width="2" stroke-linecap="round" stroke-linejoin="round"/><path d="M341.8 225.4L344.3 228.2L349.4 221.9" fill="none" stroke="#fff" stroke-width="2" stroke-linecap="round" stroke-linejoin="round"/><path d="M341.8 247.4L344.3 250.2L349.4 243.9" fill="none" stroke="#fff" stroke-width="2" stroke-linecap="round" stroke-linejoin="round"/><path d="M341.8 269.4L344.3 272.2L349.4 265.9" fill="none" stroke="#fff" stroke-width="2" stroke-linecap="round" stroke-linejoin="round"/><path d="M341.8 313.4L344.3 316.2L349.4 309.9" fill="none" stroke="#fff" stroke-width="2" stroke-linecap="round" stroke-linejoin="round"/><circle cx="288" cy="337.1" r="1.6" fill="none" stroke="#5bb8ec" stroke-width="1.3" stroke-linecap="round" stroke-linejoin="round"/><path d="M292.7 337.1H301.7" fill="none" stroke="#222" stroke-width="1.3"/><circle cx="288" cy="342" r="1.6" fill="none" stroke="#5bb8ec" stroke-width="1.3" stroke-linecap="round" stroke-linejoin="round"/><path d="M292.7 342H301.7" fill="none" stroke="#222" stroke-width="1.3"/><circle cx="288" cy="347" r="1.6" fill="none" stroke="#5bb8ec" stroke-width="1.3" stroke-linecap="round" stroke-linejoin="round"/><path d="M292.7 347H301.7" fill="none" stroke="#222" stroke-width="1.3"/><rect x="314.2" y="334.3" width="15.6" height="15.4" rx="0.8" fill="none" stroke="#222" stroke-width="1.3"/><path d="M319.6 334.3V349.7M324.6 334.3V349.7M314.2 339.5H329.8M314.2 344.5H329.8" fill="none" stroke="#5bb8ec" stroke-width="1.2"/><rect x="342.3" y="336.2" width="15.6" height="13.5" rx="2" fill="none" stroke="#222" stroke-width="1.3"/><path d="M342.3 339.8H357.9M346.6 334V336.2M353.6 334V336.2" fill="none" stroke="#222" stroke-width="1.3"/><path d="M344.5 344.5H355.2M347.5 341.6V347.3M352.5 341.6V347.3" fill="none" stroke="#5bb8ec" stroke-width="1.2"/><path d="M374.2 336.4H389.6M378.6 344.5H385.5" fill="none" stroke="#222" stroke-width="1.3"/><path d="M376.4 340.4H387.6M380.4 348.6H383.9" fill="none" stroke="#5bb8ec" stroke-width="1.3"/><path d="M412.91 336.51L414.00 334.60L415.44 334.74L416.14 336.83L417.11 337.34L419.23 336.77L420.15 337.89L419.17 339.86L419.49 340.91L421.40 342.00L421.26 343.44L419.17 344.14L418.66 345.11L419.23 347.23L418.11 348.15L416.14 347.17L415.09 347.49L414.00 349.40L412.56 349.26L411.86 347.17L410.89 346.66L408.77 347.23L407.85 346.11L408.83 344.14L408.51 343.09L406.60 342.00L406.74 340.56L408.83 339.86L409.34 338.89L408.77 336.77L409.89 335.85L411.86 336.83Z" fill="none" stroke="#222" stroke-width="1.2" stroke-linejoin="round"/><circle cx="414" cy="342" r="2.6" fill="none" stroke="#5bb8ec" stroke-width="1.3"/><path d="M444.6 336.4H453.7" fill="none" stroke="#222" stroke-width="1.3"/><text x="440.3" y="338.59999999999997" font-family="Liberation Sans" font-size="5.5" font-weight="bold" fill="#5bb8ec" text-anchor="middle">1</text><path d="M444.6 342.3H453.7" fill="none" stroke="#222" stroke-width="1.3"/><text x="440.3" y="344.5" font-family="Liberation Sans" font-size="5.5" font-weight="bold" fill="#5bb8ec" text-anchor="middle">2</text><path d="M444.6 348.4H453.7" fill="none" stroke="#222" stroke-width="1.3"/><text x="440.3" y="350.59999999999997" font-family="Liberation Sans" font-size="5.5" font-weight="bold" fill="#5bb8ec" text-anchor="middle">3</text><path d="M466.6 335.2H481.5M466.6 339.5H481.5M466.6 343.6H472.4M466.6 347.5H472.4" fill="none" stroke="#222" stroke-width="1.3"/><path d="M478.3 342.5V348.9M475.1 345.7H481.5" fill="none" stroke="#5bb8ec" stroke-width="1.3"/><path d="M504.4 337.2H500.2Q498.7 337.2 498.7 338.7V347.7Q498.7 349.2 500.2 349.2H509Q510.5 349.2 510.5 347.7V343.2" fill="none" stroke="#333" stroke-width="1.5"/><path d="M505.6 342.3L513.3 334.6M506.7 334.6H513.3V341.2" fill="none" stroke="#5bb8ec" stroke-width="1.3"/><path d="M532.8 346.3H530.5V337.2H540.8M537.4 334.4L540.8 337.2L537.4 340" fill="none" stroke="#222" stroke-width="1.3"/><path d="M543.7 337.2H545.7V346.3H535.4M538.6 343.5L535.4 346.3L538.6 349.1" fill="none" stroke="#5bb8ec" stroke-width="1.3"/><path d="M1273.8 341.4L1276.3 344.2L1281.4 337.9" fill="none" stroke="#fff" stroke-width="2" stroke-linecap="round" stroke-linejoin="round"/><path d="M298.5 411.3V408.6H307.4V411.3" fill="none" stroke="#5bb8ec" stroke-width="1.2"/><path d="M298.5 420.2H295.7V413.6H310.1V420.2H307.6" fill="none" stroke="#2a2a2a" stroke-width="1.3"/><rect x="298.5" y="418" width="9.1" height="5" rx="0.8" fill="none" stroke="#333" stroke-width="1.4"/><path d="M298.5 417.9H307.6" stroke="#777" stroke-width="1.2"/></svg>
</body></html>
